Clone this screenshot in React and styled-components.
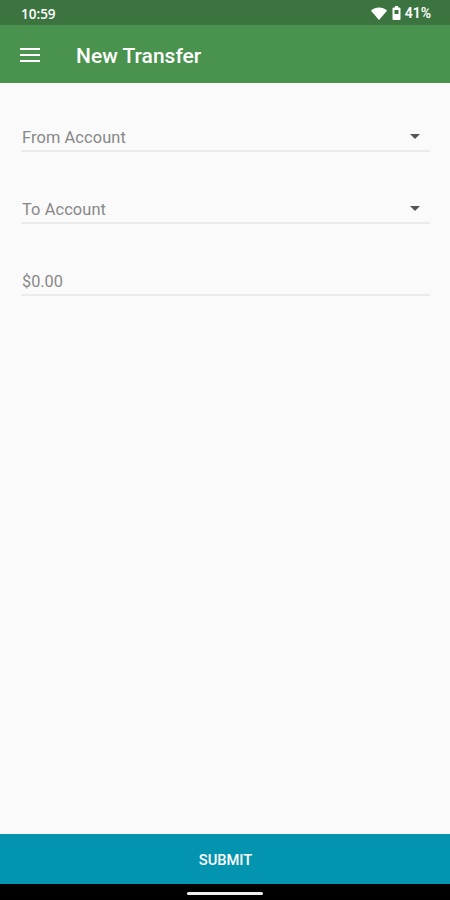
import React, { useState } from "react";
import styled, { createGlobalStyle } from "styled-components";

const GlobalStyle = createGlobalStyle`
  * { box-sizing: border-box; }
  body {
    margin: 0;
    background: #fafafa;
    font-family: Roboto, "Liberation Sans", sans-serif;
  }
`;

const Screen = styled.div`
  height: 100vh;
  display: flex;
  flex-direction: column;
  background: #fafafa;
`;

const StatusBar = styled.div`
  height: 25px;
  padding: 1px 19px 0 21px;
  display: flex;
  align-items: center;
  justify-content: space-between;
  background: #3b743f;
  color: #fff;
`;

const Clock = styled.span`
  margin-top: 1px;
  font-family: "Open Sans", Roboto, sans-serif;
  font-size: 13.5px;
  font-weight: 600;
`;

const StatusIcons = styled.div`
  display: flex;
  align-items: center;
`;

const Wifi = styled.svg`
  width: 16px;
  height: 13px;
  margin-right: 5px;
`;

const Battery = styled.svg`
  width: 9px;
  height: 14px;
  margin-right: 4px;
`;

const Percent = styled.span`
  font-size: 14px;
  font-weight: 600;
`;

const AppBar = styled.header`
  height: 58px;
  padding-left: 20px;
  display: flex;
  align-items: center;
  background: #4a934e;
  color: #fff;
`;

const MenuButton = styled.button`
  width: 20px;
  height: 14px;
  margin-top: 2px;
  padding: 0;
  border: none;
  background: none;
  display: flex;
  flex-direction: column;
  justify-content: space-between;
  cursor: pointer;
`;

const MenuLine = styled.span`
  width: 20px;
  height: 2px;
  background: #fff;
`;

const Title = styled.h1`
  margin: 3px 0 0 36px;
  font-size: 21px;
  line-height: 24px;
  font-weight: 500;
`;

const Form = styled.main`
  flex: 1;
  padding: 39px 20px 0 21px;
`;

const Field = styled.div`
  height: 30px;
  margin-bottom: 42px;
  padding: 3px 10px 0 1px;
  display: flex;
  align-items: center;
  justify-content: space-between;
  border-bottom: 2px solid #ebebeb;
`;

const Label = styled.span`
  font-size: 16.4px;
  line-height: 20px;
  letter-spacing: 0.1px;
  color: #888;
`;

const AmountInput = styled.input`
  width: 100%;
  height: 20px;
  padding: 0;
  border: none;
  outline: none;
  background: none;
  font: 16.3px Roboto, sans-serif;

  &::placeholder {
    color: #888;
    opacity: 1;
  }
`;

const Caret = styled.span`
  margin-bottom: 2px;
  border-left: 5px solid transparent;
  border-right: 5px solid transparent;
  border-top: 5px solid #555;
`;

const Submit = styled.button`
  height: 50px;
  padding: 1px 0 0 1px;
  border: none;
  background: #0395b0;
  color: #fff;
  font: 500 14.7px Roboto, sans-serif;
  text-transform: uppercase;
  cursor: pointer;
`;

const NavBar = styled.div`
  height: 16px;
  display: flex;
  align-items: center;
  justify-content: center;
  padding-top: 2px;
  background: #000;
`;

const NavHandle = styled.div`
  width: 76px;
  height: 3px;
  border-radius: 2px;
  background: #eee;
`;

export default function App() {
  const [amount, setAmount] = useState("");

  return (
    <>
      <GlobalStyle />
      <Screen>
        <StatusBar>
          <Clock>10:59</Clock>
          <StatusIcons>
            <Wifi viewBox="0 0 16 13">
              <path d="M0 3.8C4.5-.6 11.5-.6 16 3.8L8 13Z" fill="#fff" />
            </Wifi>
            <Battery viewBox="0 0 9 14">
              <path
                fill="#fff"
                fillRule="evenodd"
                d="M3 0h3v1.5h1.5q1 0 1 1V13q0 1-1 1h-6q-1 0-1-1V2.5q0-1 1-1H3ZM2.500 4v4h4V4Z"
              />
            </Battery>
            <Percent>41%</Percent>
          </StatusIcons>
        </StatusBar>

        <AppBar>
          <MenuButton aria-label="Menu">
            <MenuLine />
            <MenuLine />
            <MenuLine />
          </MenuButton>
          <Title>New Transfer</Title>
        </AppBar>

        <Form>
          <Field>
            <Label>From Account</Label>
            <Caret />
          </Field>
          <Field>
            <Label>To Account</Label>
            <Caret />
          </Field>
          <Field>
            <AmountInput
              value={amount}
              onChange={(e) => setAmount(e.target.value)}
              placeholder="$0.00"
            />
          </Field>
        </Form>

        <Submit>Submit</Submit>
        <NavBar>
          <NavHandle />
        </NavBar>
      </Screen>
    </>
  );
}
